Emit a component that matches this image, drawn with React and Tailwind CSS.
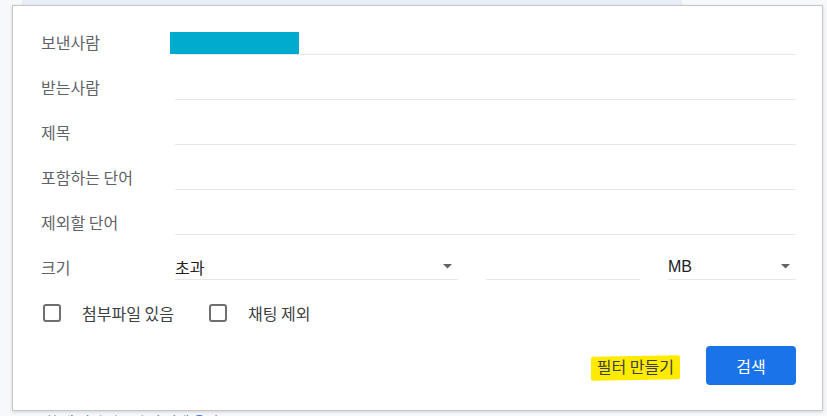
import React from 'react'

const font = { fontFamily: '"Noto Sans CJK KR", "Noto Sans", Roboto, sans-serif' }

const TextRow = ({ label, children }) => (
  <div className="flex items-end h-[45px]">
    <div className="w-[134px] h-[26px] flex items-center text-[16px] text-[#5f6368]">{label}</div>
    <div className="relative flex-1 h-[26px] border-b border-[#e6e8eb]">{children}</div>
  </div>
)

const Arrow = () => (
  <svg width="9" height="5" viewBox="0 0 9 5" className="mr-[6px]">
    <path d="M0 0 L9 0 L4.5 4.5 Z" fill="#606368" />
  </svg>
)

const Checkbox = ({ label }) => (
  <label className="flex items-center">
    <span className="w-[18px] h-[18px] ml-[2px] rounded-[3px] border-2 border-[#6f6f6f]" />
    <span className="ml-[21px] text-[16px] text-[#3c4043]">{label}</span>
  </label>
)

export default function App() {
  return (
    <div className="h-[416px] w-[827px] overflow-hidden bg-[#f6f8fc]" style={font}>
      {/* page strip behind the dialog */}
      <div className="flex h-[5px]">
        <div className="w-[22px]" />
        <div className="w-[660px] bg-[#e9edf5]" />
      </div>

      <div className="relative z-10 ml-[12px] w-[811px] h-[406px] bg-white border border-[#c6c6c6] shadow-[0_1px_3px_rgba(0,0,0,0.15)] pl-[28px] pr-[26px] pt-[4px]">
        <TextRow label="보낸사람">
          <div className="absolute left-[-5px] top-[3px] w-[129px] h-[22px] bg-[#00abcd]" />
        </TextRow>
        <TextRow label="받는사람" />
        <TextRow label="제목" />
        <TextRow label="포함하는 단어" />
        <TextRow label="제외할 단어" />

        <div className="flex items-end h-[45px]">
          <div className="w-[134px] h-[26px] flex items-center text-[16px] text-[#5f6368]">크기</div>
          <div className="w-[283px] h-[26px] flex items-center justify-between border-b border-[#e6e8eb] text-[16px] text-[#202124]">
            <span>초과</span>
            <Arrow />
          </div>
          <div className="ml-[28px] w-[154px] h-[26px] border-b border-[#e6e8eb]" />
          <div className="ml-[28px] flex-1 h-[26px] flex items-center justify-between border-b border-[#e6e8eb] text-[16px] text-[#202124]" style={{ fontFamily: '"Liberation Sans", Arial, sans-serif' }}>
            <span>MB</span>
            <Arrow />
          </div>
        </div>

        <div className="flex items-center h-[20px] mt-[23px]">
          <Checkbox label="첨부파일 있음" />
          <div className="ml-[33px]">
            <Checkbox label="채팅 제외" />
          </div>
        </div>

        <div className="flex items-center justify-end mt-[23px]">
          <div className="relative px-[6px] py-[1px]">
            <span className="absolute left-0 right-0 top-[3px] bottom-[-1px] bg-[#ffeb00] -skew-y-1 rounded-[2px]" />
            <span className="relative text-[16px] text-[#3c4043]">필터 만들기</span>
          </div>
          <button className="ml-[26px] w-[90px] h-[39px] rounded-[4px] bg-[#1a73e8] text-white text-[16px]">
            검색
          </button>
        </div>
      </div>

      <div className="mt-[0px] pl-[45px] text-[14px] text-[#202124]">
        한 개 <span className="text-[#1a56c4]">필터 만들기 및 검색 옵션</span>
      </div>
    </div>
  )
}
